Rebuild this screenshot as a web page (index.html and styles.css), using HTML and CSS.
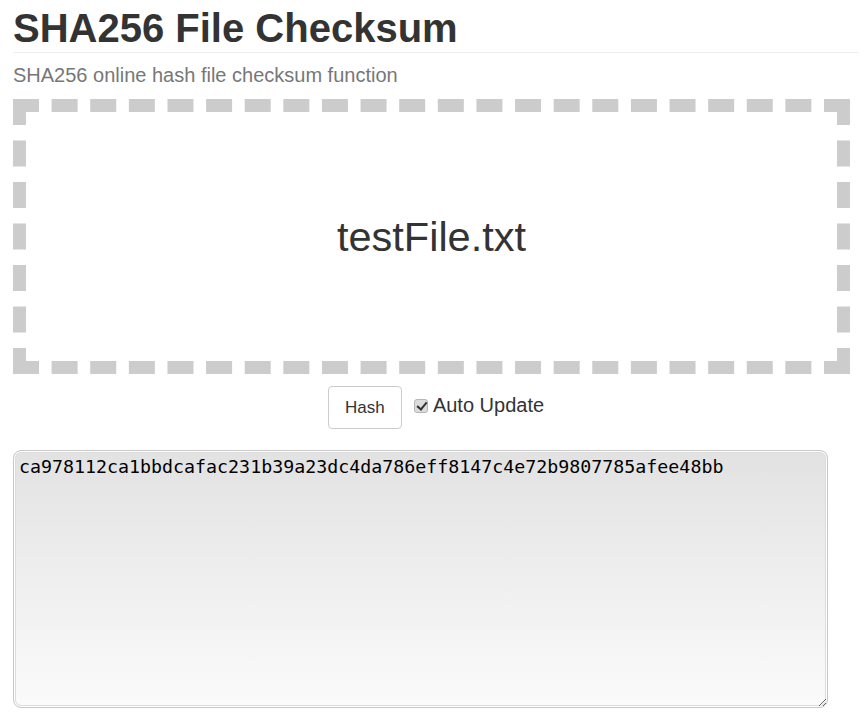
FILE: index.html
```html
<!DOCTYPE html>
<html>
<head>
<meta charset="utf-8">
<link rel="stylesheet" href="styles.css">
</head>
<body>
<div class="page">
  <div class="header">
    <h1>SHA256 File Checksum</h1>
  </div>
  <p class="lead">SHA256 online hash file checksum function</p>
  <div class="drop">testFile.txt</div>
  <div class="controls">
    <button class="btn">Hash</button>
    <label class="check"><input type="checkbox" checked> Auto Update</label>
  </div>
  <textarea class="output">ca978112ca1bbdcafac231b39a23dc4da786eff8147c4e72b9807785afee48bb</textarea>
</div>
</body>
</html>
```

FILE: styles.css
```css
html, body {
  margin: 0;
  padding: 0;
  background: #fff;
}
body {
  font-family: "Liberation Sans", Arial, sans-serif;
  color: #333;
}
.page {
  padding: 0 9px 0 13px;
}
.header {
  border-bottom: 1px solid #eee;
  padding-top: 7px;
  padding-bottom: 3px;
}
h1 {
  margin: 0;
  font-size: 40px;
  font-weight: bold;
  line-height: 42px;
  color: #333;
}
.lead {
  margin: 10px 0 0;
  font-size: 20px;
  line-height: 24px;
  color: #777;
}
.drop {
  margin-top: 12px;
  width: 811px;
  height: 249px;
  border: 13px dashed #ccc;
  display: flex;
  align-items: center;
  justify-content: center;
  font-size: 41.5px;
  color: #333;
}
.controls {
  width: 837px;
  display: flex;
  justify-content: center;
  align-items: center;
  gap: 12px;
  margin-top: 12px;
  padding-left: 9px;
  box-sizing: border-box;
}
.btn {
  font-family: "Liberation Sans", Arial, sans-serif;
  font-size: 17px;
  color: #333;
  background: #fff;
  border: 1px solid #ccc;
  border-radius: 4px;
  width: 74px;
  height: 43px;
  padding: 0;
}
.check {
  font-size: 20px;
  display: flex;
  align-items: center;
  gap: 5px;
  margin-top: -4px;
}
.check input {
  -webkit-appearance: none;
  appearance: none;
  margin: 0;
  width: 14px;
  height: 14px;
  border: 1px solid #b5b5b5;
  border-radius: 3px;
  background: #dcdcdc;
  position: relative;
}
.check input:checked::after {
  content: "";
  position: absolute;
  left: 4px;
  top: 0px;
  width: 4px;
  height: 8px;
  border: solid #333;
  border-width: 0 2px 2px 0;
  transform: rotate(40deg);
}
.output {
  display: block;
  margin-top: 21px;
  width: 815px;
  height: 258px;
  box-sizing: border-box;
  border: 1px solid #c8c8c8;
  border-radius: 8px;
  box-shadow: inset 0 0 0 1px #fff, inset 0 0 0 2px #dcdcdc;
  background: linear-gradient(to bottom, #e2e2e2 0%, #fbfbfb 100%);
  font-family: "DejaVu Sans Mono", monospace;
  font-size: 18.3px;
  line-height: 22px;
  color: #000;
  padding: 5px 5px;
  resize: both;
}
```
